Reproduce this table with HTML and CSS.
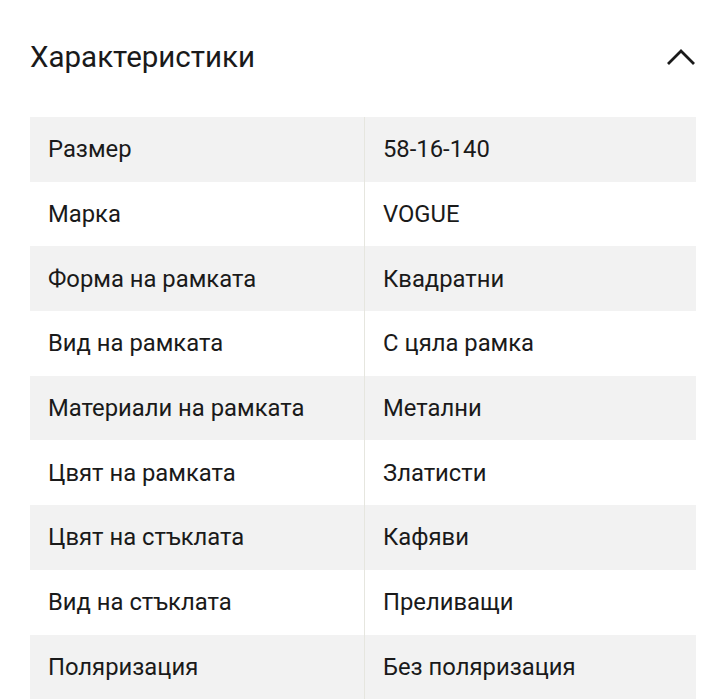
FILE: index.html
```html
<!DOCTYPE html>
<html lang="bg">
<head>
<meta charset="utf-8">
<link rel="stylesheet" href="styles.css">
</head>
<body>
<section class="specs">
  <header class="specs-head">
    <h2 class="specs-title">Характеристики</h2>
    <svg class="chevron" width="30" height="20" viewBox="0 0 30 20"><path d="M2 17 L15 4 L28 17" fill="none" stroke="#1a1a1a" stroke-width="2.8"/></svg>
  </header>
  <div class="table">
    <div class="row"><div class="cell key">Размер</div><div class="cell val">58-16-140</div></div>
    <div class="row"><div class="cell key">Марка</div><div class="cell val">VOGUE</div></div>
    <div class="row"><div class="cell key">Форма на рамката</div><div class="cell val">Квадратни</div></div>
    <div class="row"><div class="cell key">Вид на рамката</div><div class="cell val">С цяла рамка</div></div>
    <div class="row"><div class="cell key">Материали на рамката</div><div class="cell val">Метални</div></div>
    <div class="row"><div class="cell key">Цвят на рамката</div><div class="cell val">Златисти</div></div>
    <div class="row"><div class="cell key">Цвят на стъклата</div><div class="cell val">Кафяви</div></div>
    <div class="row"><div class="cell key">Вид на стъклата</div><div class="cell val">Преливащи</div></div>
    <div class="row"><div class="cell key">Поляризация</div><div class="cell val">Без поляризация</div></div>
  </div>
</section>
</body>
</html>
```
FILE: styles.css
```css
html, body { margin: 0; padding: 0; background: #fff; }
body { font-family: Roboto, "Noto Sans", sans-serif; color: #1a1a1a; }
.specs { padding: 0 30px; }
.specs-head {
  display: flex; align-items: center; justify-content: space-between;
  height: 117px; padding-bottom: 3px; box-sizing: border-box;
}
.specs-title { margin: 0; font-size: 29.5px; font-weight: 400; }
.table { display: flex; flex-direction: column; }
.row { display: grid; grid-template-columns: 335px 1fr; height: 64.7px; }
.row:nth-child(odd) { background: #f2f2f2; }
.cell { display: flex; align-items: center; font-size: 23.8px; }
.key { padding-left: 18px; border-right: 1px solid #e6e6df; }
.val { padding-left: 18px; }
```
